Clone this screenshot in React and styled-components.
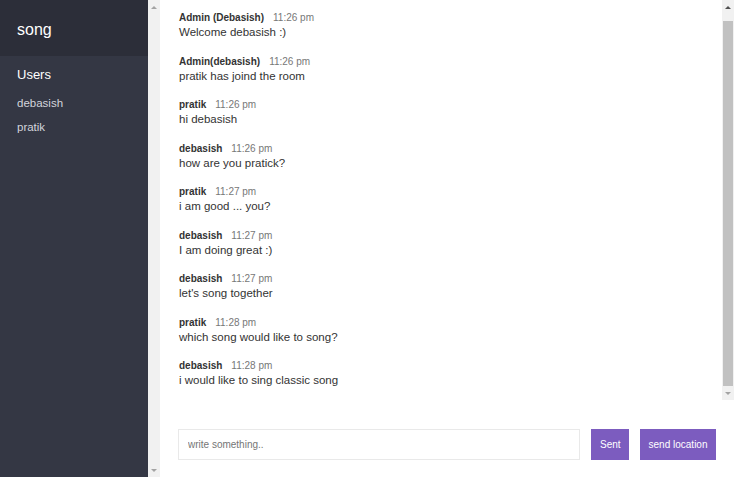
import { useLayoutEffect, useRef } from 'react';
import styled, { createGlobalStyle } from 'styled-components';

const users = ['debasish', 'pratik'];

const messages = [
  { name: 'Admin (Debasish)', time: '11:26 pm', text: 'Welcome debasish :)' },
  { name: 'Admin(debasish)', time: '11:26 pm', text: 'pratik has joind the room' },
  { name: 'pratik', time: '11:26 pm', text: 'hi debasish' },
  { name: 'debasish', time: '11:26 pm', text: 'how are you pratick?' },
  { name: 'pratik', time: '11:27 pm', text: 'i am good ... you?' },
  { name: 'debasish', time: '11:27 pm', text: 'I am doing great :)' },
  { name: 'debasish', time: '11:27 pm', text: "let's song together" },
  { name: 'pratik', time: '11:28 pm', text: 'which song would like to song?' },
  { name: 'debasish', time: '11:28 pm', text: 'i would like to sing classic song' },
];

// a classic scrollbar drawn in flow (browser ones are hidden in the capture)
function ScrollRail({ thumb, canUp, canDown }) {
  return (
    <Rail>
      <RailButton>
        <Arrow $up $active={canUp} />
      </RailButton>
      <Track>{thumb && <Thumb />}</Track>
      <RailButton>
        <Arrow $active={canDown} />
      </RailButton>
    </Rail>
  );
}

export default function App() {
  const listRef = useRef();

  // keep the newest message in view
  useLayoutEffect(() => {
    const el = listRef.current;
    el.scrollTop = el.scrollHeight;
  }, []);

  return (
    <>
      <GlobalStyle />
      <Chat>
        <SidebarWrap>
          <Sidebar>
            <RoomTitle>song</RoomTitle>
            <ListTitle>Users</ListTitle>
            <UserList>
              {users.map((user) => (
                <User key={user}>{user}</User>
              ))}
            </UserList>
          </Sidebar>
          <ScrollRail />
        </SidebarWrap>
        <Main>
          <MessagesWrap>
            <Messages ref={listRef}>
              {messages.map((msg, i) => (
                <Message key={i}>
                  <Meta>
                    <Name>{msg.name}</Name>
                    <Time>{msg.time}</Time>
                  </Meta>
                  <Text>{msg.text}</Text>
                </Message>
              ))}
            </Messages>
            <ScrollRail thumb canUp />
          </MessagesWrap>
          <Compose>
            <Form onSubmit={(e) => e.preventDefault()}>
              <Input placeholder='write something..' autoFocus />
              <Button type='submit'>Sent</Button>
            </Form>
            <Button type='button'>send location</Button>
          </Compose>
        </Main>
      </Chat>
    </>
  );
}

const GlobalStyle = createGlobalStyle`
  * {
    box-sizing: border-box;
  }
  body {
    margin: 0;
    font-family: "Liberation Sans", Arial, sans-serif;
    color: #333;
  }
`;

const Rail = styled.div`
  display: flex;
  flex-direction: column;
  width: 12px;
  flex-shrink: 0;
  background: #f1f1f1;
`;

const RailButton = styled.div`
  display: flex;
  align-items: center;
  justify-content: center;
  height: 14px;
  flex-shrink: 0;
`;

const Arrow = styled.span`
  width: 0;
  height: 0;
  border-left: 3px solid transparent;
  border-right: 3px solid transparent;
  ${({ $up, $active }) =>
    $up
      ? `border-bottom: 3px solid ${$active ? '#505050' : '#a3a3a3'};`
      : `border-top: 3px solid ${$active ? '#505050' : '#a3a3a3'};`}
`;

const Track = styled.div`
  display: flex;
  flex: 1;
  padding-top: 7px;
`;

const Thumb = styled.div`
  flex: 1;
  margin: 0 1px;
  background: #c1c1c1;
`;

const Chat = styled.div`
  display: flex;
  height: 100vh;
`;

const SidebarWrap = styled.div`
  display: flex;
  flex-shrink: 0;
`;

const Sidebar = styled.div`
  width: 148px;
  background: #343744;
  color: #fff;
`;

const RoomTitle = styled.h2`
  display: flex;
  align-items: center;
  height: 56px;
  margin: 0;
  padding: 3px 17px 0;
  background: #2c2e39;
  font-size: 16px;
  font-weight: 400;
`;

const ListTitle = styled.h3`
  margin: 11px 0 0;
  padding: 0 17px;
  font-size: 13px;
  font-weight: 400;
  line-height: 15px;
`;

const UserList = styled.ul`
  list-style: none;
  margin: 9px 0 0;
  padding: 0 17px;
`;

const User = styled.li`
  font-size: 11.5px;
  line-height: 24px;
  color: #d3d4dc;
`;

const Main = styled.div`
  display: flex;
  flex-direction: column;
  flex: 1;
  min-width: 0;
`;

const MessagesWrap = styled.div`
  display: flex;
  flex: 1;
  min-height: 0;
`;

const Messages = styled.div`
  flex: 1;
  overflow-y: hidden;
  padding: 15px 19px 0;
`;

const Message = styled.div`
  margin-bottom: 14.5px;

  &:last-child {
    margin-bottom: 11.5px;
  }
`;

const Meta = styled.p`
  margin: 0;
  line-height: 14px;
  font-size: 10px;
`;

const Name = styled.span`
  font-weight: 700;
  margin-right: 9px;
`;

const Time = styled.span`
  color: #777;
`;

const Text = styled.p`
  margin: 0;
  font-size: 11.5px;
  line-height: 15px;
`;

const Compose = styled.div`
  display: flex;
  flex-shrink: 0;
  height: 77px;
  padding: 29px 18px 17px 18px;
`;

const Form = styled.form`
  display: flex;
  flex: 1;
  margin-right: 11px;
`;

const Input = styled.input`
  flex: 1;
  margin-right: 11px;
  padding: 0 9px;
  border: 1px solid #e9e9e9;
  font: inherit;
  font-size: 10px;
  color: #333;
  outline: none;

  &::placeholder {
    color: #757575;
  }
`;

const Button = styled.button`
  height: 31px;
  padding: 0 8.5px;
  border: none;
  background: #7c5cbf;
  color: #fff;
  font: inherit;
  font-size: 10px;
  cursor: pointer;
`;
